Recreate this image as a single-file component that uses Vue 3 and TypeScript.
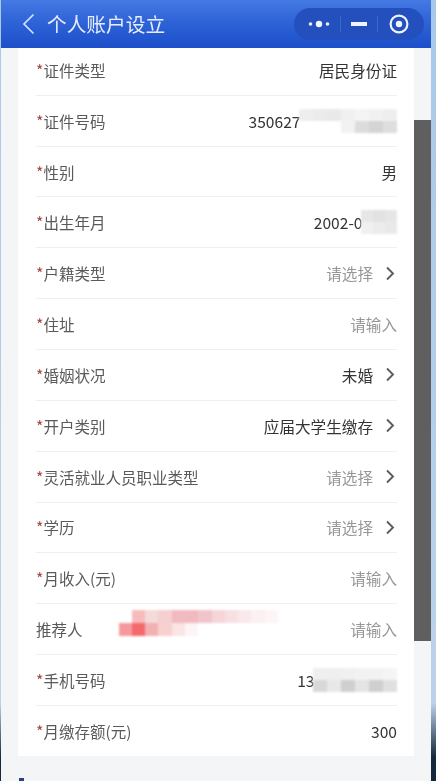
<script setup lang="ts">
interface Tile { rows: string[][]; w: number; h: number }
interface Row {
  label: string
  req: boolean
  value?: string
  kind?: 'set' | 'hint'
  arrow?: boolean
  cover?: Tile
  note?: Tile
}

const rows: Row[] = [
  { label: '证件类型', req: true, value: '居民身份证' },
  {
    label: '证件号码', req: true, value: '350627',
    cover: { w: 14, h: 12, rows: [
      ['#eee', '#ebebeb', '#e9e9e9', '#f0f0f0', '#f4f4f4', '#f1f1f1', '#eee'],
      ['', '', '', '#f2f2f2', '#dcdcdc', '#d4d4d4', '#dedede']
    ] }
  },
  { label: '性别', req: true, value: '男' },
  {
    label: '出生年月', req: true, value: '2002-0',
    cover: { w: 12, h: 12, rows: [
      ['#e6e6e6', '#e2e2e2', '#e6e6e6'],
      ['#f0f0f0', '#ececec', '#e9e9e9']
    ] }
  },
  { label: '户籍类型', req: true, value: '请选择', kind: 'hint', arrow: true },
  { label: '住址', req: true, value: '请输入', kind: 'hint' },
  { label: '婚姻状况', req: true, value: '未婚', arrow: true },
  { label: '开户类别', req: true, value: '应届大学生缴存', arrow: true },
  { label: '灵活就业人员职业类型', req: true, value: '请选择', kind: 'hint', arrow: true },
  { label: '学历', req: true, value: '请选择', kind: 'hint', arrow: true },
  { label: '月收入(元)', req: true, value: '请输入', kind: 'hint' },
  {
    label: '推荐人', req: false, value: '请输入', kind: 'hint',
    note: { w: 13.3, h: 13, rows: [
      ['', '#f6bcbc', '#f5dada', '#f6cfd0', '#f1b9c0', '#f1b9c0', '#efc5cb', '#f5d5d8', '#f7e0e2', '#f9e9eb', '#fbf0f2', '#fcf4f6'],
      ['#f59a9c', '#f46a6c', '#f3b0b0', '#f7d0d0', '#fae4e4', '#fdf5f5', '', '', '', '', '', '']
    ] }
  },
  {
    label: '手机号码', req: true, value: '13',
    cover: { w: 14, h: 12, rows: [
      ['#efefef', '#efefef', '#f0f0f0', '#f2f2f2', '#f2f2f2', '#f5f5f5'],
      ['#d8d8d8', '#e8e8e8', '#cfcfcf', '#e4e4e4', '#cfcfcf', '#e0e0e0']
    ] }
  },
  { label: '月缴存额(元)', req: true, value: '300' }
]
</script>

<template>
  <div class="screen">
    <div class="page">
      <header class="bar">
        <div class="title-wrap">
          <svg class="back" width="13" height="22" viewBox="0 0 13 22">
            <path d="M11.5 1.5 2 11l9.5 9.5" fill="none" stroke="#d4e2fb" stroke-width="1.7" />
          </svg>
          <span class="title">个人账户设立</span>
        </div>
        <div class="capsule">
          <svg width="22" height="8" viewBox="0 0 22 8">
            <circle cx="2.5" cy="4" r="1.8" fill="#e8effd" />
            <circle cx="11" cy="4" r="3.2" fill="#f3f6fe" />
            <circle cx="19.5" cy="4" r="1.8" fill="#e8effd" />
          </svg>
          <i class="sep"></i>
          <i class="dash"></i>
          <i class="sep"></i>
          <svg width="22" height="22" viewBox="0 0 22 22">
            <circle cx="11" cy="11" r="8.4" fill="none" stroke="#eef3fe" stroke-width="2.2" />
            <circle cx="11" cy="11" r="3.2" fill="#eef3fe" />
          </svg>
        </div>
      </header>
      <div class="body">
        <div class="content">
          <div class="card">
            <div v-for="row in rows" :key="row.label" class="row">
              <div class="label">
                <span v-if="row.req" class="star">*</span>{{ row.label }}
                <div v-if="row.note" class="mosaic note">
                  <div v-for="(line, i) in row.note.rows" :key="i" class="line">
                    <i
                      v-for="(c, j) in line"
                      :key="j"
                      :style="{ width: row.note.w + 'px', height: row.note.h + 'px', background: c || 'transparent' }"
                    ></i>
                  </div>
                </div>
              </div>
              <div class="value" :class="row.kind">
                <span>{{ row.value }}</span>
                <div v-if="row.cover" class="mosaic cover">
                  <div v-for="(line, i) in row.cover.rows" :key="i" class="line">
                    <i
                      v-for="(c, j) in line"
                      :key="j"
                      :style="{ width: row.cover.w + 'px', height: row.cover.h + 'px', background: c || 'transparent' }"
                    ></i>
                  </div>
                </div>
                <svg v-if="row.arrow" class="chev" width="10" height="15" viewBox="0 0 10 15">
                  <path d="M2 1.5 8 7.5l-6 6" fill="none" stroke="#5c5c5c" stroke-width="1.9" />
                </svg>
              </div>
            </div>
          </div>
          <i class="mark"></i>
        </div>
        <div class="track"><div class="thumb"></div></div>
      </div>
    </div>
    <div class="edge"></div>
  </div>
</template>

<style scoped>
.screen {
  width: 436px;
  height: 781px;
  overflow: hidden;
  display: flex;
  padding-left: 1px;
  box-sizing: border-box;
  background: linear-gradient(#a9c8e8 0, #bcd2ea 90%, #15283c 97%);
  font-family: "Noto Sans CJK SC", "Noto Sans", sans-serif;
  filter: blur(0.4px);
}
.page {
  width: 430px;
  height: 781px;
  display: flex;
  flex-direction: column;
  background: #f4f5f7;
}
.edge {
  width: 5px;
}
.bar {
  height: 48px;
  flex: none;
  display: flex;
  align-items: center;
  justify-content: space-between;
  padding: 0 7px 0 21px;
  background: linear-gradient(#4579e2, #2f63d8 45%, #1c4fc9);
  position: relative;
  z-index: 1;
}
.title-wrap {
  display: flex;
  align-items: center;
  gap: 12px;
}
.title {
  font-size: 19.7px;
  color: #e6eefc;
  line-height: 1;
}
.capsule {
  width: 130px;
  height: 32px;
  box-sizing: border-box;
  display: flex;
  align-items: center;
  justify-content: space-between;
  padding: 0 14px 0 14px;
  border-radius: 16px;
  background: #2450bd;
}
.sep {
  width: 1px;
  height: 16px;
  background: #3c69cf;
}
.dash {
  width: 16px;
  height: 4px;
  background: #f0f4fe;
}
.body {
  flex: 1;
  min-height: 0;
  display: flex;
  padding-left: 17px;
  overflow: hidden;
}
.content {
  width: 396px;
  flex: none;
}
.card {
  margin-top: -3.1px;
  background: #fff;
  padding: 0 17px 0 18px;
}
.row {
  height: 50.85px;
  box-sizing: border-box;
  display: flex;
  align-items: center;
  justify-content: space-between;
  border-bottom: 1px solid #eeeff1;
  font-size: 15.5px;
}
.row:last-child {
  height: 50px;
  border-bottom: 0;
}
.label {
  display: flex;
  align-items: center;
  color: #5a5a5a;
}
.star {
  color: #a5474a;
  font-size: 16px;
}
.value {
  display: flex;
  align-items: center;
  color: #333;
  font-size: 15.6px;
}
.value.hint {
  color: #979797;
}
.mosaic {
  filter: blur(0.8px);
}
.cover {
  margin-left: -1.5px;
}
.line {
  display: flex;
}
.line i {
  display: block;
  flex: none;
}
.note {
  margin-left: 36px;
  margin-bottom: 12px;
}
.chev {
  margin: 0 2px 0 12px;
}
.mark {
  display: block;
  width: 5px;
  height: 4px;
  margin: 22px 0 0 1px;
  background: #2c3f8f;
}
.track {
  width: 17px;
  flex: none;
}
.thumb {
  margin-top: 72px;
  height: 521px;
  background: #5f5f5f;
}
</style>
